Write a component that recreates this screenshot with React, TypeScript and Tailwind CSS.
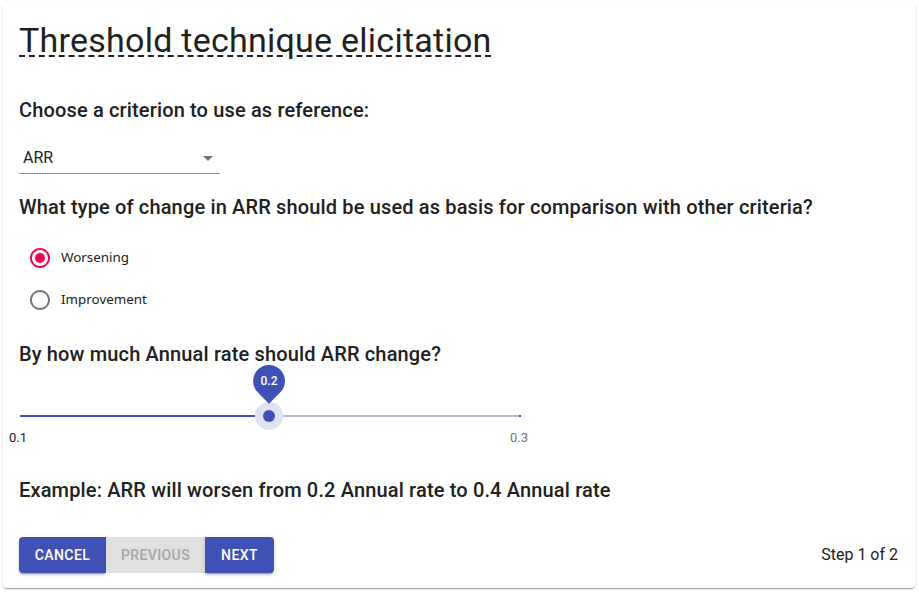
import React from "react";

const h6 = "text-[20px] leading-[32px] font-medium text-[#212121] tracking-[0.15px]";
const btn = "h-[36px] text-[14px] font-medium uppercase tracking-[0.4px] flex items-center justify-center";
const btnShadow =
  "shadow-[0px_3px_1px_-2px_rgba(0,0,0,0.2),0px_2px_2px_0px_rgba(0,0,0,0.14),0px_1px_5px_0px_rgba(0,0,0,0.12)]";

function Radio({ checked, label }: { checked: boolean; label: string }) {
  return (
    <div className="flex items-center h-[42px]">
      <div className="w-[42px] h-[42px] flex items-center justify-center">
        <svg width="24" height="24" viewBox="0 0 24 24">
          <path
            fill={checked ? "#f50057" : "#757575"}
            d="M12 2C6.48 2 2 6.48 2 12s4.48 10 10 10 10-4.48 10-10S17.52 2 12 2zm0 18c-4.42 0-8-3.58-8-8s3.58-8 8-8 8 3.58 8 8-3.58 8-8 8z"
          />
          {checked && <circle cx="12" cy="12" r="5" fill="#f50057" />}
        </svg>
      </div>
      <span className="text-[13.4px] text-[#212121] -mt-[1px]" style={{ fontFamily: '"Noto Sans", sans-serif' }}>
        {label}
      </span>
    </div>
  );
}

export default function App() {
  return (
    <div className="w-[919px] h-[592px] bg-white" style={{ fontFamily: 'Roboto, "Liberation Sans", sans-serif' }}>
      <div className="ml-[3px] mt-[3px] w-[912px] rounded-[4px] bg-white px-[16px] pt-[16px] pb-[15px] shadow-[0px_2px_1px_-1px_rgba(0,0,0,0.2),0px_1px_1px_0px_rgba(0,0,0,0.14),0px_1px_3px_0px_rgba(0,0,0,0.12)]">
        <h4 className="text-[34px] leading-[42px] text-[#212121] tracking-[0.25px]">
          <span className="underline decoration-dashed decoration-2 underline-offset-[3px] decoration-[#212121]">
            Threshold technique elicitation
          </span>
        </h4>

        <h6 className={`${h6} mt-[33px]`}>Choose a criterion to use as reference:</h6>

        <div className="mt-[16px] w-[201px] h-[32px] border-b border-[#949494] flex items-start justify-between">
          <div className="pl-[4px] pt-[6px] text-[16px] leading-[19px] text-[#212121]">ARR</div>
          <svg className="mt-[4px]" width="24" height="24" viewBox="0 0 24 24">
            <path d="M7 10l5 5 5-5z" fill="#757575" />
          </svg>
        </div>

        <h6 className={`${h6} mt-[17px]`}>
          What type of change in ARR should be used as basis for comparison with other criteria?
        </h6>

        <div className="mt-[14px] flex flex-col">
          <Radio checked label="Worsening" />
          <Radio checked={false} label="Improvement" />
        </div>

        <h6 className={`${h6} mt-[17px]`}>By how much Annual rate should ARR change?</h6>

        {/* slider */}
        <div className="w-[520px] h-[104px] flex flex-col">
          <div className="relative ml-[1px] mt-[45px] w-[501px] h-[2px] flex">
            <div className="w-[250px] h-[2px] bg-[#3f51b5]" />
            <div className="flex-1 h-[2px] bg-[#b2b9e1]" />
            <div className="w-[2px] h-[2px] bg-[#3f51b5]" />
            {/* thumb overlay */}
            <div className="absolute left-[235px] top-[-13px] w-[28px] h-[28px] rounded-full bg-[#dfe2f3] flex items-center justify-center">
              <div className="w-[12px] h-[12px] rounded-full bg-[#3f51b5]" />
            </div>
            {/* value label */}
            <div className="absolute left-[233px] top-[-50px] w-[32px] h-[32px]">
              <div className="w-[32px] h-[32px] rounded-[50%_50%_50%_0] rotate-[-45deg] bg-[#3f51b5]" />
              <div className="absolute inset-0 flex items-center justify-center text-[12px] font-medium text-white">
                0.2
              </div>
            </div>
          </div>
          <div className="mt-[14px] -ml-[11px] w-[521px] flex justify-between text-[13px] leading-[13px]">
            <span className="w-[20px] text-center text-[#212121]">0.1</span>
            <span className="w-[20px] text-center text-[#757575]">0.3</span>
          </div>
        </div>

        <h6 className={h6}>Example: ARR will worsen from 0.2 Annual rate to 0.4 Annual rate</h6>

        <div className="mt-[31px] flex items-center justify-between">
          <div className="flex">
            <button className={`${btn} w-[87px] rounded-l-[4px] bg-[#3f51b5] text-white ${btnShadow}`}>Cancel</button>
            <button className={`${btn} w-[99px] bg-[#e0e0e0] text-[#a6a6a6]`}>Previous</button>
            <button className={`${btn} w-[69px] rounded-r-[4px] bg-[#3f51b5] text-white ${btnShadow}`}>Next</button>
          </div>
          <div className="text-[16px] text-[#212121] mr-[1px]">Step 1 of 2</div>
        </div>
      </div>
    </div>
  );
}
